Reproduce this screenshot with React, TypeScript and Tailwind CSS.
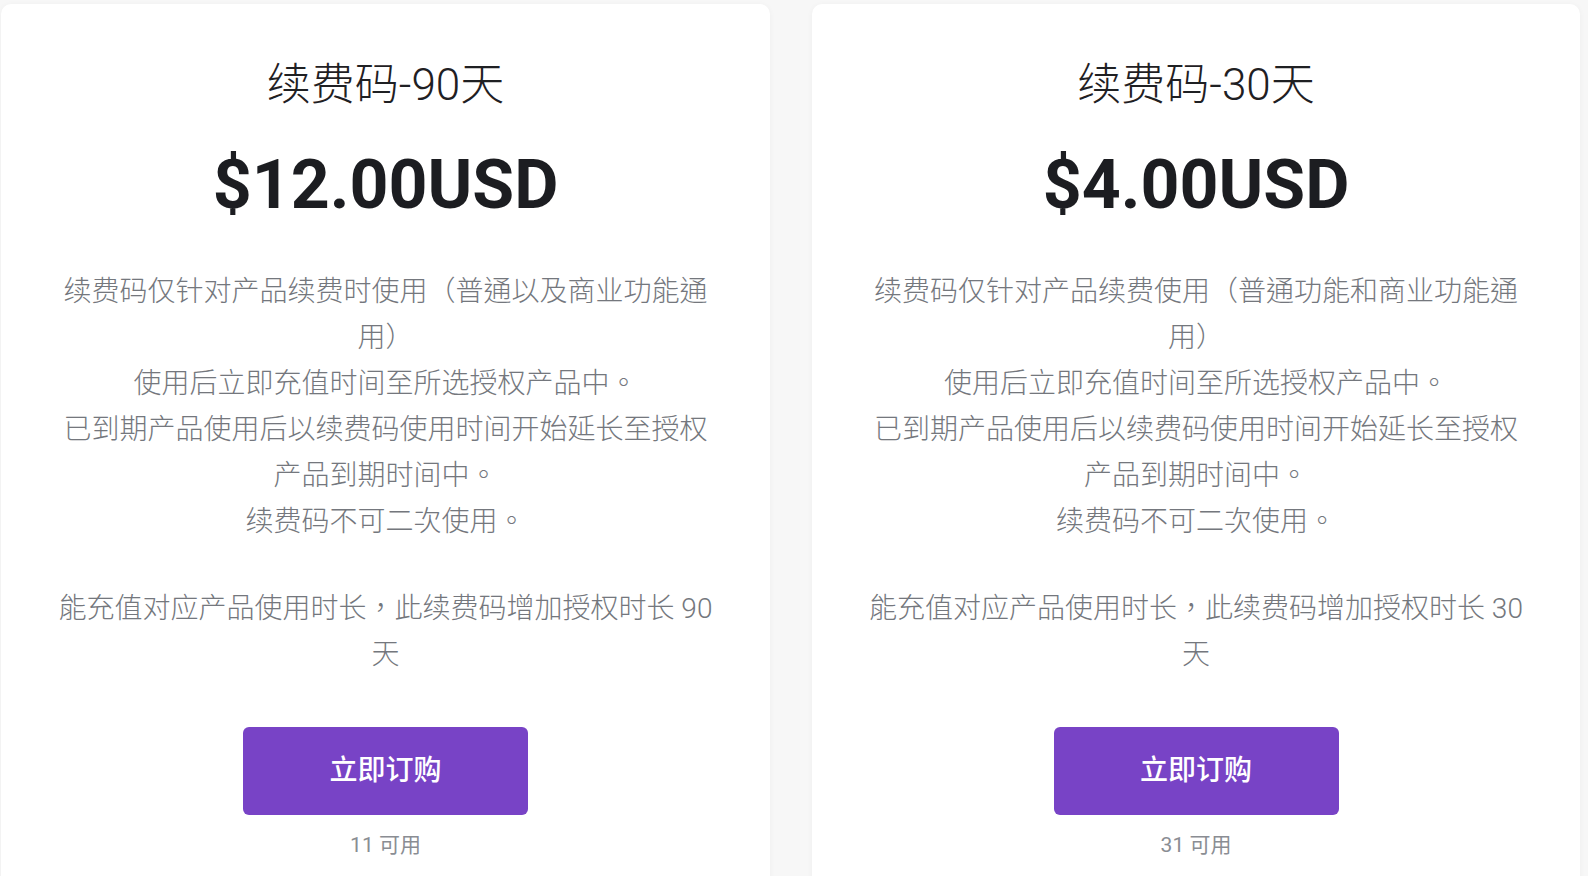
const plans = [
  {
    id: 'renew-90',
    title: '续费码-90天',
    price: '$12.00USD',
    lines: [
      '续费码仅针对产品续费时使用（普通以及商业功能通用）',
      '使用后立即充值时间至所选授权产品中。',
      '已到期产品使用后以续费码使用时间开始延长至授权产品到期时间中。',
      '续费码不可二次使用。',
    ],
    note: '能充值对应产品使用时长，此续费码增加授权时长 90 天',
    stock: '11 可用',
  },
  {
    id: 'renew-30',
    title: '续费码-30天',
    price: '$4.00USD',
    lines: [
      '续费码仅针对产品续费使用（普通功能和商业功能通用）',
      '使用后立即充值时间至所选授权产品中。',
      '已到期产品使用后以续费码使用时间开始延长至授权产品到期时间中。',
      '续费码不可二次使用。',
    ],
    note: '能充值对应产品使用时长，此续费码增加授权时长 30 天',
    stock: '31 可用',
  },
];

export default function App() {
  return (
    <div className="min-h-screen bg-[#f7f7f7] pl-[1px] pr-[8px] pt-[4px] font-['Roboto','Noto_Sans_CJK_TC',sans-serif]">
      <div className="grid grid-cols-[769px_768px] gap-[42px]">
        {plans.map((plan) => (
          <div
            key={plan.id}
            className="bg-white rounded-[10px] shadow-[0_1px_6px_rgba(0,0,0,0.04)] px-[55px] pt-[57px] pb-[40px] flex flex-col items-center text-center"
          >
            <h2 className="text-[44px] leading-[48px] font-light text-[#1f2023]">{plan.title}</h2>
            <div className="mt-[36px] text-[68px] leading-[80px] font-bold text-[#1c1d21]">{plan.price}</div>

            <div className="mt-[44px] text-[28px] leading-[46px] font-light text-[#74777d]">
              {plan.lines.map((line, idx) => (
                <p key={idx}>{line}</p>
              ))}
            </div>
            <p className="mt-[41px] text-[28px] leading-[46px] font-light text-[#74777d]">{plan.note}</p>

            <button className="mt-[49px] w-[285px] h-[88px] rounded-[6px] bg-[#7843c6] text-white text-[28px] font-medium">
              立即订购
            </button>
            <div className="mt-[16px] text-[21px] leading-[28px] text-[#8a8d93]">{plan.stock}</div>
          </div>
        ))}
      </div>
    </div>
  );
}
